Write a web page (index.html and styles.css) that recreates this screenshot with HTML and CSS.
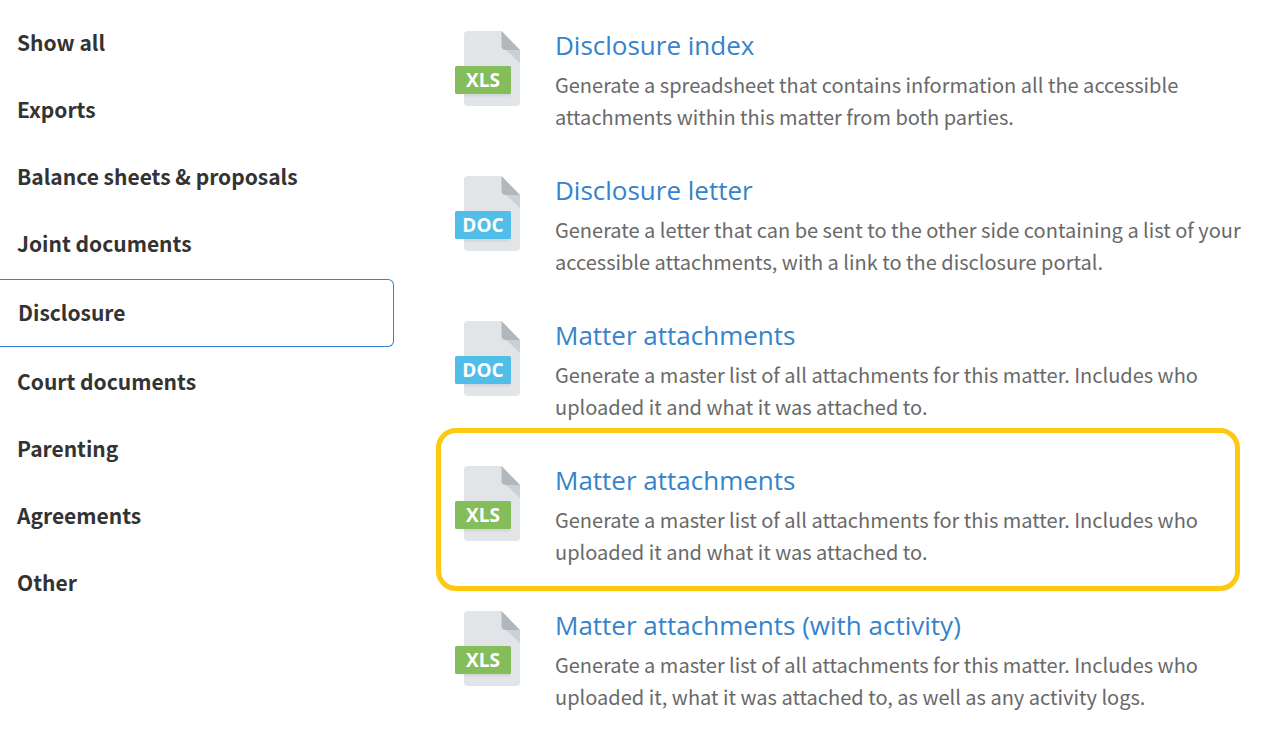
FILE: index.html
```html
<!DOCTYPE html>
<html lang="en">
<head>
  <meta charset="utf-8" />
  <meta name="viewport" content="width=device-width, initial-scale=1" />
  <title>Matter documents</title>
  <link rel="stylesheet" href="styles.css">
</head>
<body>
  <!-- Blank page shared by the file icons -->
  <svg class="icon-defs" width="0" height="0" aria-hidden="true">
    <symbol id="file-base" viewBox="0 0 66 76">
      <path d="M13 0H46.500L65 19V71.500Q65 75 61 75H13Q9 75 9 71V4Q9 0 13 0Z" fill="#e1e5e8"/>
      <path d="M51 19H65V32Z" fill="#cad0d8"/>
      <path d="M46.500 0L65 19H51Q46.500 19 46.500 15Z" fill="#b0b7bd"/>
      <path d="M9 63H56Q56 65.500 53 65.500H9Z" fill="#d3d8dd"/>
    </symbol>
  </svg>

  <div class="page">
    <nav class="categories">
      <a href="#">Show all</a>
      <a href="#">Exports</a>
      <a href="#">Balance sheets &amp; proposals</a>
      <a href="#">Joint documents</a>
      <a href="#" class="active">Disclosure</a>
      <a href="#">Court documents</a>
      <a href="#">Parenting</a>
      <a href="#">Agreements</a>
      <a href="#">Other</a>
    </nav>

    <main class="documents">
      <article class="document">
        <svg class="file-icon xls" viewBox="0 0 66 76">
          <use href="#file-base" width="66" height="76"/>
          <rect y="35" width="56" height="28" rx="1.500"/>
          <text x="28" y="56">XLS</text>
        </svg>
        <div class="document-text">
          <h2><a href="#">Disclosure index</a></h2>
          <p>Generate a spreadsheet that contains information all the accessible attachments within this matter from both parties.</p>
        </div>
      </article>
      <article class="document">
        <svg class="file-icon doc" viewBox="0 0 66 76">
          <use href="#file-base" width="66" height="76"/>
          <rect y="35" width="56" height="28" rx="1.500"/>
          <text x="28" y="56">DOC</text>
        </svg>
        <div class="document-text">
          <h2><a href="#">Disclosure letter</a></h2>
          <p>Generate a letter that can be sent to the other side containing a list of your accessible attachments, with a link to the disclosure portal.</p>
        </div>
      </article>
      <article class="document">
        <svg class="file-icon doc" viewBox="0 0 66 76">
          <use href="#file-base" width="66" height="76"/>
          <rect y="35" width="56" height="28" rx="1.500"/>
          <text x="28" y="56">DOC</text>
        </svg>
        <div class="document-text">
          <h2><a href="#">Matter attachments</a></h2>
          <p>Generate a master list of all attachments for this matter. Includes who uploaded it and what it was attached to.</p>
        </div>
      </article>
      <article class="document highlighted">
        <svg class="file-icon xls" viewBox="0 0 66 76">
          <use href="#file-base" width="66" height="76"/>
          <rect y="35" width="56" height="28" rx="1.500"/>
          <text x="28" y="56">XLS</text>
        </svg>
        <div class="document-text">
          <h2><a href="#">Matter attachments</a></h2>
          <p>Generate a master list of all attachments for this matter. Includes who uploaded it and what it was attached to.</p>
        </div>
      </article>
      <article class="document">
        <svg class="file-icon xls" viewBox="0 0 66 76">
          <use href="#file-base" width="66" height="76"/>
          <rect y="35" width="56" height="28" rx="1.500"/>
          <text x="28" y="56">XLS</text>
        </svg>
        <div class="document-text">
          <h2><a href="#">Matter attachments (with activity)</a></h2>
          <p>Generate a master list of all attachments for this matter. Includes who uploaded it, what it was attached to, as well as any activity logs.</p>
        </div>
      </article>
    </main>
  </div>
</body>
</html>
```
FILE: styles.css
```css
* {
  box-sizing: border-box;
}
body {
  margin: 0;
  font-family: 'Noto Sans CJK SC', 'Noto Sans', sans-serif;
  background-color: #fff;
  color: #333;
}
.icon-defs {
  position: absolute;
}
.page {
  display: flex;
  gap: 61px;
}

/* Category menu */
.categories {
  flex: 0 0 394px;
  padding-top: 9px;
}
.categories a {
  display: flex;
  align-items: center;
  height: 67px;
  padding: 0 0 2px 17px;
  font-size: 21px;
  font-weight: bold;
  color: #333;
  text-decoration: none;
}
.categories .active {
  height: 68px;
  margin: 2px 0 1px;
  padding-left: 18px;
  border: 1px solid #3583ca;
  border-left: none;
  border-radius: 0 6px 6px 0;
}

/* Document list */
.documents {
  flex: 1;
  padding: 27px 28px 0 0;
}
.document {
  position: relative;
  display: flex;
  gap: 34px;
  height: 145px;
}
.file-icon {
  flex: none;
  width: 66px;
  height: 76px;
  margin-top: 4px;
}
.file-icon text {
  font-family: 'Open Sans', sans-serif;
  font-size: 19px;
  font-weight: 700;
  fill: #fff;
  text-anchor: middle;
}
.xls rect {
  fill: #84bd5a;
}
.doc rect {
  fill: #50bee8;
}
.document h2 {
  margin: 0 0 6px;
  font-family: 'Open Sans', sans-serif;
  font-size: 26px;
  font-weight: normal;
  line-height: 36px;
}
.document h2 a {
  color: #3583ca;
  text-decoration: none;
}
.document p {
  margin: 0;
  font-size: 20px;
  line-height: 32px;
  color: #696969;
}
.highlighted::after {
  content: "";
  position: absolute;
  top: -34px;
  right: 10px;
  bottom: 16px;
  left: -19px;
  border: 5px solid #fec90e;
  border-radius: 20px;
  pointer-events: none;
}
```
